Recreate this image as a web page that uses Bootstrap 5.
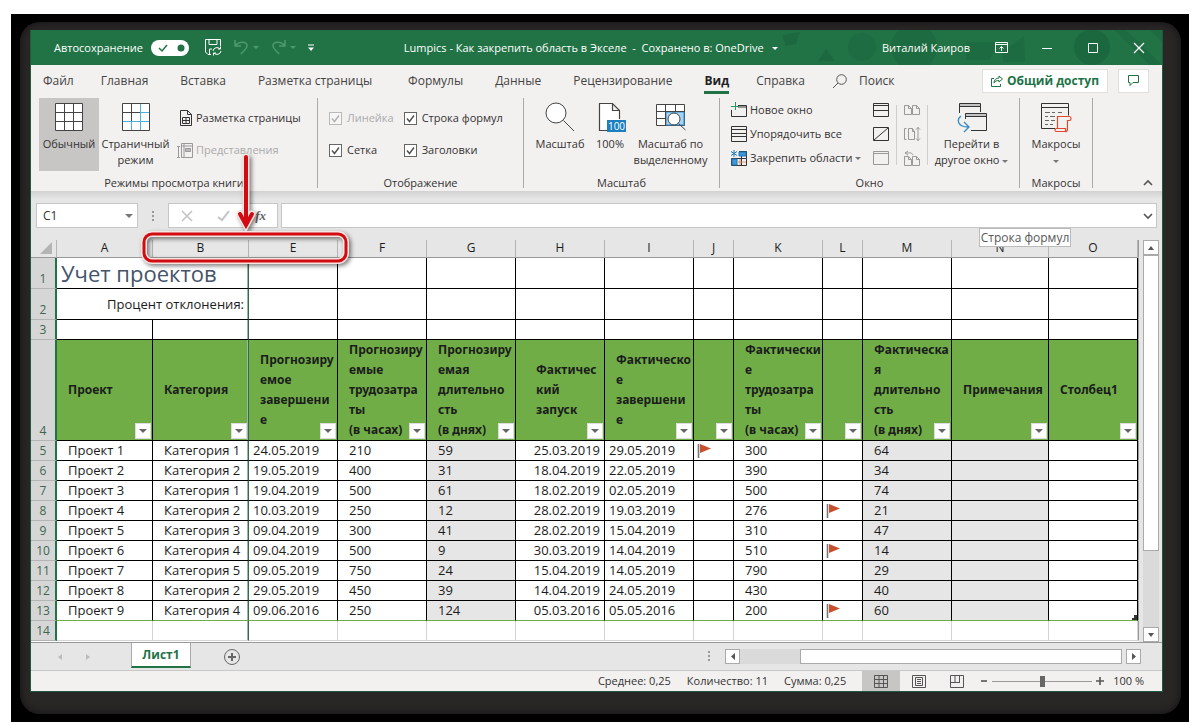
<!DOCTYPE html>
<html lang="ru">
<head>
<meta charset="utf-8">
<meta name="viewport" content="width=device-width, initial-scale=1">
<title>Lumpics - Как закрепить область в Экселе</title>
<link href="https://cdn.jsdelivr.net/npm/bootstrap@5.3.0/dist/css/bootstrap.min.css" rel="stylesheet">
<style>
:root { --xl: #217346; --ribbon: #f3f1f0; --chrome: #e6e6e6; --head: #70ad47; }
body { font-family: "Open Sans", "Noto Sans", sans-serif; font-size: 11px; line-height: 16px; color: #333; background: #fff; }
button, input { font: inherit; color: inherit; }
button { border: 0; background: none; padding: 0; }
svg { display: block; flex: none; overflow: visible; }
.stage { background: #000; margin: 14px 4px 0 11px; padding: 8px 8px 8px 9px; }
.bezel { background: #292626; border-radius: 20px; padding: 8px 18px 22px 10px; box-shadow: inset 0 0 8px #111; }
.app-window { border: 1px solid #1e5a3c; border-top: 0; background: var(--chrome); }

.title-bar { height: 35px; background: var(--xl); color: #fff; padding-left: 23px; overflow: hidden; }
.title-bar > * { position: relative; }
.title-bar .art { position: absolute; right: 0; top: 0; }
.title-bar .doc { flex: 1; margin-left: 86px; white-space: pre; }
.title-bar .history { color: #4e9a6d; margin-left: 12px; }
.win-btn { width: 46px; display: flex; justify-content: center; }
.caret { width: 0; height: 0; border: 3px solid transparent; border-top-color: currentColor; border-bottom: 0; display: inline-block; vertical-align: middle; }

.menu { height: 32px; background: var(--ribbon); font-size: 12px; padding: 0 13px 0 12px; gap: 32px; }
.menu a { color: #444; text-decoration: none; white-space: nowrap; line-height: 20px; padding-top: 3px; border-bottom: 3px solid transparent; }
.menu a.active { font-weight: 700; color: #222; border-color: var(--xl); }
.menu a.near { margin-left: -5px; }
.menu a.apart { margin-left: 4px; }
.menu .white { background: #fff; border: 1px solid #e1dfdd; height: 24px; color: var(--xl); }

.ribbon { height: 94px; background: var(--ribbon); }
.group { border-right: 1px solid #aaa; margin: 1px 0 3px; height: 90px; flex: none; display: flex; flex-direction: column; }
.group-body { height: 77px; flex: none; display: flex; }
.group-label { text-align: center; line-height: 16px; }
.big { display: flex; flex-direction: column; align-items: center; padding-top: 5px; height: 73px; gap: 5px; white-space: nowrap; flex: none; }
.big .pic { height: 28px; display: flex; align-items: center; }
.small-cmd { display: flex; align-items: center; gap: 3px; white-space: nowrap; height: 24px; }
.dim { color: #aaa; }
.tick { appearance: none; width: 13px; height: 13px; border: 1px solid #666; background: #fff url("data:image/svg+xml,%3Csvg xmlns='http://www.w3.org/2000/svg' viewBox='0 0 11 11'%3E%3Cpath d='M2 5.5l2.5 3L9 2.500' fill='none' stroke='%23555' stroke-width='1.500'/%3E%3C/svg%3E") center/11px; margin: 0; flex: none; }
.tick:disabled { opacity: .4; }
.option { display: flex; align-items: center; gap: 5px; height: 32px; white-space: nowrap; }
.rule { width: 1px; background: #d0cecc; height: 60px; margin-top: 7px; }

.formula-row { height: 49px; background: linear-gradient(#d2d2d2, var(--chrome) 8px); padding: 12px 5px 0; }
.box { height: 25px; background: #fff; border: 1px solid #c6c6c6; }
.box input { border: 0; outline: 0; background: none; min-width: 0; padding: 0 6px; font-size: 12px; }
.fx { font: italic bold 13px "Liberation Serif", serif; color: #666; }

.sheet { table-layout: fixed; border-collapse: separate; border-spacing: 0; width: 100%; font-size: 13px; line-height: 19px; color: #1c1c1c; background: #fff; }
.sheet td, .sheet th { padding: 0 0 0 11px; border-right: 1px solid #000; border-bottom: 1px solid #000; overflow: hidden; white-space: nowrap; height: 20px; vertical-align: middle; }
.sheet .letters th { height: 18px; line-height: 16px; padding: 0 0 1px; font-size: 12px; font-weight: 400; text-align: center; background: var(--chrome); border-right-color: #b4b4b4; border-bottom-color: #999; }
.sheet tbody th { padding: 0; text-align: center; vertical-align: bottom; font-weight: 400; font-size: 12px; line-height: 18px; color: #3c6650; background: #d6d6d6; border-right: 2px solid var(--xl); border-bottom-color: #b4b4b4; }
.sheet .tall > * { height: 31px; }
.sheet td.lock { border-right-color: #35684c; box-shadow: inset -1px 0 #9ab8a6; }
.sheet .fields td { position: relative; height: 100px; background: var(--head); font-family: "Noto Sans", sans-serif; font-size: 12px; font-weight: 700; line-height: 20px; }
.sheet .fields td.indent { padding-left: 20px; }
.sheet .edge { border-color: transparent !important; border-right-color: #999 !important; background: #fff !important; padding: 0 !important; box-shadow: none; }
.sheet .letters .edge { background: var(--chrome) !important; }
.sheet .rec td:nth-child(4), .sheet .rec td:nth-child(8) { padding-left: 4px; }
.sheet .rec td:nth-child(7) { padding: 0 4px 0 0; text-align: right; }
.sheet .rec td:nth-child(9), .sheet .rec td:nth-child(11) { padding-left: 3px; }
.sheet .rec td:nth-child(6), .sheet .rec td:nth-child(12), .sheet .rec td:nth-child(13) { background: #e6e6e6; }
.sheet .last td { border-bottom-color: var(--head); }
.sheet .blank td { border-color: #d4d4d4; }
.sheet .blank td.lock { border-right-color: #35684c; }
.sheet .filter { position: absolute; right: 1px; bottom: 1px; width: 16px; height: 16px; background: #fff; border: 1px solid #ddd; display: flex; align-items: center; justify-content: center; color: #666; }
.sheet .filter .caret { border-width: 4px 4px 0; }
.sheet h1 { font-size: 22px; line-height: 30px; margin: 0 0 0 -7px; font-weight: 400; color: #44546a; }
.grid-wrap { border-bottom: 1px solid #999; }
.sheet-area { flex: 1; min-width: 0; padding-bottom: 1px; background: #fff; }
.scroll-y { width: 16px; margin: 0 3px 0 4px; background: #dadada; }
.scroll-btn { width: 15px; height: 15px; background: #fff; border: 1px solid #aaa; display: flex; align-items: center; justify-content: center; flex: none; color: #555; }
.scroll-y .scroll-btn { width: 16px; }
.thumb { background: #fff; border: 1px solid #aaa; }
.scroll-rest { height: 76px; }

.tabs-row { height: 28px; border-bottom: 1px solid #c8c8c8; padding-right: 21px; }
.sheet-tab { width: 60px; height: 25px; background: #fff; border: 1px solid #aaa; border-top: 0; border-bottom: 2px solid var(--xl); color: var(--xl); font-size: 12px; font-weight: 700; margin-left: 41px; }
.scroll-x { width: 416px; margin-left: 15px; background: #dadada; }
.scroll-x .spare { width: 60px; }
.scroll-x .gutter { width: 4px; background: var(--chrome); }
.status { height: 20px; background: var(--ribbon); }
.view { width: 38px; height: 20px; display: flex; align-items: center; justify-content: center; }
.zoom-range { appearance: none; width: 100px; height: 11px; margin: 0; background: linear-gradient(#999, #999) center/100% 1px no-repeat; }
.zoom-range::-webkit-slider-thumb { appearance: none; width: 5px; height: 11px; background: #666; }
.zoom-value { margin: 0 18px 0 9px; }

.hint { left: 948px; top: 198px; width: 92px; height: 19px; background: #fff; border: 1px solid #bbb; font-size: 12px; color: #575757; text-align: center; line-height: 17px; white-space: nowrap; z-index: 2; }
.callout { left: 108px; top: 120px; z-index: 3; pointer-events: none; filter: drop-shadow(2px 2px 2px rgba(0,0,0,.5)); }
</style>
</head>
<body>
<svg width="0" height="0" class="position-absolute" aria-hidden="true">
  <symbol id="flag" viewBox="0 0 16 16"><path d="M1.500 1v14" stroke="#777" stroke-width="1.600"/><path d="M3 1l11 4.500L3 10z" fill="#c8502e"/></symbol>
</svg>
<div class="stage"><div class="bezel"><main class="app-window position-relative">

  <header class="title-bar d-flex align-items-center position-relative">
    <svg class="art" width="410" height="35" viewBox="0 0 410 35" fill="#1b653c" aria-hidden="true"><path d="M30 5l18-3-4 12-10 2zM66 31l8-12 9 12z" opacity=".7"/><circle cx="110" cy="17" r="14" opacity=".5"/><circle cx="162" cy="17" r="23" opacity=".6"/><path d="M214 12h32l-8 18h-24zM250 22l14-10 8-6 1 26h-22z" opacity=".6"/><circle cx="340" cy="17" r="18" opacity=".8"/><path d="M374 0l36 35h-12L362 0zM398 0h12v12z" opacity=".6"/></svg>
    <label for="autosave">Автосохранение</label>
    <button id="autosave" aria-pressed="true" class="ms-2"><svg width="38" height="16" viewBox="0 0 38 16"><rect width="38" height="16" rx="8" fill="#fff"/><path d="M8 8l3 3 5-6" fill="none" stroke="#217346" stroke-width="1.500"/><circle cx="30" cy="8" r="3.500" fill="#217346"/></svg></button>
    <button aria-label="Сохранить" class="ms-3"><svg width="17" height="17" viewBox="0 0 17 17" fill="none" stroke="#fff"><path d="M6 15.500H3L.5 13V.5h15V7M4 .5v5h8v-5M4.500 15.500V10H7"/><path d="M8 12a4 4 0 0 1 7-2m1 2a4 4 0 0 1-7 2M15.500 7.500V10H13M8.500 16.500V14H11"/></svg></button>
    <button aria-label="Отменить" class="history d-flex align-items-center"><svg width="15" height="15" viewBox="0 0 15 15" fill="none" stroke="currentColor" stroke-width="1.500"><path d="M1 0v6h6M1 6c4-5 12-5 12 0 0 3-3 4-6 8"/></svg><span class="caret ms-1"></span></button>
    <button aria-label="Повторить" class="history d-flex align-items-center"><svg width="15" height="15" viewBox="0 0 15 15" fill="none" stroke="currentColor" stroke-width="1.500"><path d="M14 0v6H8M14 6C10 1 2 1 2 6c0 3 3 4 6 8"/></svg><span class="caret ms-1"></span></button>
    <button aria-label="Настройка панели" style="margin-left:12px"><svg width="6" height="8" viewBox="0 0 6 8"><path d="M0 1h6" stroke="#fff"/><path d="M0 3.500h6L3 7z" fill="#fff"/></svg></button>
    <span class="doc ps-1">Lumpics - Как закрепить область в Экселе  -  Сохранено в: OneDrive   <span class="caret"></span></span>
    <span class="me-2">Виталий Каиров</span>
    <button class="win-btn" aria-label="Параметры ленты"><svg width="13" height="11" viewBox="0 0 13 11" fill="none" stroke="#fff"><path d="M.5.5h12v10H.5zM.5 2.500h12M6.500 9V4.500M4.500 6.500l2-2 2 2"/></svg></button>
    <button class="win-btn" aria-label="Свернуть"><svg width="10" height="10"><path d="M0 5.500h10" stroke="#fff"/></svg></button>
    <button class="win-btn" aria-label="Развернуть"><svg width="10" height="10"><path d="M.5.5h9v9h-9z" fill="none" stroke="#fff"/></svg></button>
    <button class="win-btn" aria-label="Закрыть"><svg width="10" height="10"><path d="M0 0l10 10M10 0L0 10" stroke="#fff" stroke-width="1.200"/></svg></button>
  </header>

  <nav class="menu d-flex align-items-center">
    <a href="#">Файл</a><a href="#" class="near">Главная</a><a href="#">Вставка</a><a href="#">Разметка страницы</a><a href="#" class="apart">Формулы</a><a href="#">Данные</a><a href="#">Рецензирование</a><a href="#" class="active">Вид</a><a href="#" class="near">Справка</a>
    <a href="#" class="near d-flex align-items-center" style="gap:11px"><svg width="16" height="15" viewBox="0 0 16 15" fill="none" stroke="#555"><circle cx="9.500" cy="5.500" r="4.800"/><path d="M6 9L1 14"/></svg>Поиск</a>
    <div class="d-flex ms-auto" style="gap:10px">
      <button class="white fw-bold d-flex align-items-center gap-1 px-2 text-nowrap"><svg width="12" height="12" viewBox="0 0 12 12" fill="none" stroke="currentColor"><path d="M3 3.500H.5v8h9V9M8 1l3.500 3L8 7V5.500C5.500 5.500 4 6 3 8c0-3 2-5 5-5z"/></svg>Общий доступ</button>
      <button class="white d-flex align-items-center px-2" aria-label="Примечания"><svg width="13" height="12" viewBox="0 0 13 12" fill="none" stroke="currentColor"><path d="M1.500.5h10v7H6l-3 3v-3H1.500z"/></svg></button>
    </div>
  </nav>

  <section class="ribbon d-flex">
    <div class="group" style="width:287px">
      <div class="group-body ps-2">
        <button class="big" style="width:60px;background:#c8c6c4"><span class="pic"><svg width="28" height="28" viewBox="0 0 28 28" fill="none" stroke="#444"><path d="M.5.5h27v27H.5z" fill="#fff"/><path d="M9.500 0v28M18.500 0v28M0 9.500h28M0 18.500h28"/></svg></span>Обычный</button>
        <button class="big" style="width:73px"><span class="pic"><svg width="28" height="28" viewBox="0 0 28 28" fill="none" stroke="#444"><path d="M.5.5h27v27H.5z" fill="#fff"/><path d="M9.500 0v18M0 9.500h18"/><path d="M18.500 1v26M1 18.500h26M19 9.500h8M9.500 19v8" stroke="#4bafe0"/></svg></span>Страничный<br>режим</button>
        <div class="pt-1" style="margin-left:7px">
          <button class="small-cmd" style="height:32px"><svg width="14" height="16" viewBox="0 0 14 16" fill="none" stroke="#333"><path d="M1.500.5h7l4 4v11h-11zM8.500.5v4h4M3.500 7.500h7v6h-7zM7 7.500v6M3.500 10.500h7"/></svg>Разметка страницы</button>
          <button class="small-cmd dim" style="height:32px" disabled><svg width="14" height="15" viewBox="2 0 14 15" fill="none" stroke="#999"><path d="M0 3.500h3M0 14.500h3M1.500 3.500v11M4.500.5h11v14h-11zM7 0v15M4.500 3h11"/><path d="M8.500 5.500h5v3h-5z" fill="#bbb"/></svg>Представления</button>
        </div>
      </div>
      <div class="group-label">Режимы просмотра книги</div>
    </div>
    <div class="group" style="width:206px">
      <div class="group-body pt-1" style="padding-left:11px;gap:10px">
        <div><label class="option dim"><input class="tick" type="checkbox" checked disabled>Линейка</label><label class="option"><input class="tick" type="checkbox" checked>Сетка</label></div>
        <div><label class="option"><input class="tick" type="checkbox" checked>Строка формул</label><label class="option"><input class="tick" type="checkbox" checked>Заголовки</label></div>
      </div>
      <div class="group-label">Отображение</div>
    </div>
    <div class="group" style="width:196px">
      <div class="group-body ps-2">
        <button class="big" style="width:56px"><span class="pic"><svg width="30" height="28" viewBox="0 0 30 28" fill="none" stroke="#444"><circle cx="11" cy="10" r="10" fill="#fff"/><path d="M18.500 17.500L29 28"/></svg></span>Масштаб</button>
        <button class="big" style="width:44px"><span class="pic"><svg width="27" height="29" viewBox="-2 0 27 29"><path d="M8 27.500H.5V.5h13l7 7V16M13.500.5v7h7" fill="#fff" stroke="#444" stroke-width="1.200"/><path d="M8 17h19v12H8z" fill="#1e7fc0"/><text x="17.500" y="27" fill="#fff" font-size="10" text-anchor="middle">100</text></svg></span>100%</button>
        <button class="big" style="width:77px"><span class="pic"><svg width="30" height="26" viewBox="0 0 30 26" fill="none" stroke="#444"><path d="M.5.500h28v21H.5z" fill="#fff"/><path d="M10 8h18v13H10z" fill="#a6d4f2" stroke="#2f8fd0"/><path d="M9.500 0v22M19.500 0v8M0 7.500h28M0 14.500h10"/><circle cx="18" cy="15" r="6" fill="#fff"/><path d="M22.500 19.500l7 6.500"/></svg></span>Масштаб по<br>выделенному</button>
      </div>
      <div class="group-label">Масштаб</div>
    </div>
    <div class="group" style="width:300px">
      <div class="group-body" style="padding-left:11px">
        <div style="width:142px">
          <button class="small-cmd"><svg width="16" height="16" viewBox="0 0 16 16" fill="none" stroke="#333"><path d="M7 3.500h8.500v11H.5V8M7 5h9"/><path d="M4.500 0v8M0 4.500h8" stroke="#2f9464"/></svg>Новое окно</button>
          <button class="small-cmd"><svg width="16" height="16" viewBox="0 0 16 16" fill="none" stroke="#333"><path d="M.5.500h15v7H.5zM.5 7.500h15v8H.5zM0 3.500h16M0 10.500h16"/></svg>Упорядочить все</button>
          <button class="small-cmd"><svg width="16" height="16" viewBox="1 0 16 16" fill="none" stroke="#333"><path d="M1.500 8.500h15v7h-15zM9 1.500h7.500v7M11.500 2v13M6.500 8v7"/><path d="M9 2h7v4H9zM2 9h5v6H2z" fill="#3f96d8" stroke="#1c74b8"/><path d="M4 0v7M1 1.500l6 4M7 1.500l-6 4" stroke="#1c74b8"/><path d="M10 9v6M8 12h8" stroke="#d9906b"/></svg>Закрепить области<span class="caret" style="color:#777"></span></button>
        </div>
        <div>
          <button class="small-cmd" aria-label="Разделить"><svg width="16" height="14" fill="none" stroke="#333"><path d="M.5.5h15v13H.5zM0 2.500h16M0 7.500h16"/></svg></button>
          <button class="small-cmd" aria-label="Скрыть"><svg width="16" height="14" fill="none" stroke="#333"><path d="M.5.5h15v13H.5zM1 13L15 1"/></svg></button>
          <button class="small-cmd" aria-label="Отобразить" disabled><svg width="16" height="14" fill="none" stroke="#999"><path d="M.5.5h15v13H.5zM0 2.500h16"/></svg></button>
        </div>
        <div class="rule" style="margin-left:7px;margin-right:7px"></div>
        <div>
          <button class="small-cmd" aria-label="Рядом"><svg width="16" height="10" fill="none" stroke="#999"><path d="M.5.5h4l3 3v6h-7zM8.500.5h4l3 3v6h-7zM4.500.5v3h3M12.500.5v3h3"/></svg></button>
          <button class="small-cmd" aria-label="Синхронная прокрутка"><svg width="16" height="14" fill="none" stroke="#999"><path d="M2.500 1.500h-2v11h2M4.500 1.500h4l2 3v8h-6zM8.500 1.500v3h2M14 0v14M12 2.500l2-2 2 2M12 11.500l2 2 2-2"/></svg></button>
          <button class="small-cmd" aria-label="Восстановить расположение"><svg width="16" height="15" fill="none" stroke="#999"><path d="M.5 5.500h4l3 3v6h-7zM8.500 5.500h4l3 3v6h-7zM4.500 5.500v3h3M12.500 5.500v3h3M9 4C8 1 4 2 1 2M4 0L1 2l3 2"/></svg></button>
        </div>
        <div class="rule" style="margin-left:7px"></div>
        <button class="big" style="width:87px"><span class="pic"><svg width="30" height="28" viewBox="0 0 30 28" fill="none" stroke="#333"><path d="M2.500 10V.5h21V9M2.500 3.500h21M14 27.500h15.500v-17h-21V16M8.500 13.500h21"/><path d="M3 1h20v2H3zM9 11h20v2H9z" fill="#c4c4c4" stroke="none"/><path d="M4 13c-5 4-3 11 7 11M7 19l5 5-5 5" stroke="#3b8bc4" stroke-width="1.400"/></svg></span><span>Перейти в<br>другое окно <span class="caret" style="color:#777"></span></span></button>
      </div>
      <div class="group-label">Окно</div>
    </div>
    <div class="group" style="width:73px">
      <div class="group-body justify-content-center">
        <button class="big"><span class="pic"><svg width="30" height="29" viewBox="0 0 30 29" fill="none" stroke="#333"><path d="M14 25.500H.5V.5h27v12M0 4.500h28" /><path d="M4 9.500h5M11 9.500h3M17 9.500h4M4 13.500h3M9 13.500h5M4 17.500h4M10 17.500h4M4 21.500h3M9 21.500h3" stroke="#666"/><path d="M16.500 25V13.500h12c2 0 2 4 0 4h-2V26c0 3-2 3-2 2.500h-9c-2 0-2-3 0-3h9V28" stroke="#e0492f" stroke-width="1.200"/></svg></span><span>Макросы<br><span class="caret" style="color:#777"></span></span></button>
      </div>
      <div class="group-label">Макросы</div>
    </div>
    <button class="ms-auto align-self-end pb-1 me-2" aria-label="Свернуть ленту"><svg width="12" height="9" fill="none" stroke="#555" stroke-width="1.600"><path d="M2 7l4-4 4 4"/></svg></button>
  </section>

  <section class="formula-row d-flex">
    <div class="box d-flex align-items-center pe-1" style="width:102px"><input class="w-100" value="C1" aria-label="Имя"><span class="caret" style="border-width:4px 4px 0;color:#777"></span></div>
    <svg class="mt-2" style="margin:0 14px" width="2" height="12" fill="#999"><path d="M0 0h2v2H0zM0 4h2v2H0zM0 8h2v2H0z"/></svg>
    <div class="box d-flex align-items-center justify-content-between" style="width:110px;padding:0 11px 0 13px">
      <button aria-label="Отмена" disabled><svg width="10" height="10" stroke="#c4c4c4" stroke-width="1.600"><path d="M0 0l10 10M10 0L0 10"/></svg></button>
      <button aria-label="Ввод" disabled><svg width="12" height="10" fill="none" stroke="#c4c4c4" stroke-width="2"><path d="M0 6l4 3 7-9"/></svg></button>
      <button class="fx">fx</button>
    </div>
    <div class="box d-flex align-items-center flex-grow-1 pe-1" style="margin-left:3px"><input class="flex-grow-1" aria-label="Строка формул"><svg width="8" height="6" fill="none" stroke="#555" stroke-width="1.600"><path d="M0 1l4 4 4-4"/></svg></div>
  </section>

  <section class="grid-wrap d-flex">
    <div class="sheet-area">
    <table class="sheet">
      <colgroup><col style="width:26px"><col style="width:96px"><col style="width:96px"><col style="width:89px"><col style="width:89px"><col style="width:89px"><col style="width:89px"><col style="width:89px"><col style="width:40px"><col style="width:89px"><col style="width:40px"><col style="width:89px"><col style="width:97px"><col style="width:89px"><col></colgroup>
      <thead><tr class="letters"><th><svg class="ms-auto me-1" width="12" height="12"><path d="M12 0v12H0z" fill="#b4b4b4"/></svg></th><th>A</th><th>B</th><th>E</th><th>F</th><th>G</th><th>H</th><th>I</th><th>J</th><th>K</th><th>L</th><th>M</th><th>N</th><th>O</th><th class="edge"></th></tr></thead>
      <tbody>
      <tr class="tall"><th>1</th><td colspan="2" class="lock"><h1>Учет проектов</h1></td><td></td><td></td><td></td><td></td><td></td><td></td><td></td><td></td><td></td><td></td><td></td><td class="edge"></td></tr>
      <tr class="tall"><th>2</th><td colspan="2" class="lock text-end pe-1">Процент отклонения:</td><td></td><td></td><td></td><td></td><td></td><td></td><td></td><td></td><td></td><td></td><td></td><td class="edge"></td></tr>
      <tr><th>3</th><td></td><td class="lock"></td><td></td><td></td><td></td><td></td><td></td><td></td><td></td><td></td><td></td><td></td><td></td><td class="edge"></td></tr>
      <tr class="fields"><th>4</th>
        <td>Проект<button class="filter" aria-label="Фильтр"><span class="caret"></span></button></td>
        <td class="lock">Категория<button class="filter" aria-label="Фильтр"><span class="caret"></span></button></td>
        <td>Прогнозиру<br>емое<br>завершени<br>е<button class="filter" aria-label="Фильтр"><span class="caret"></span></button></td>
        <td>Прогнозиру<br>емые<br>трудозатра<br>ты<br>(в часах)<button class="filter" aria-label="Фильтр"><span class="caret"></span></button></td>
        <td>Прогнозиру<br>емая<br>длительно<br>сть<br>(в днях)<button class="filter" aria-label="Фильтр"><span class="caret"></span></button></td>
        <td class="indent">Фактичес<br>кий<br>запуск<button class="filter" aria-label="Фильтр"><span class="caret"></span></button></td>
        <td>Фактическо<br>е<br>завершени<br>е<button class="filter" aria-label="Фильтр"><span class="caret"></span></button></td>
        <td><button class="filter" aria-label="Фильтр"><span class="caret"></span></button></td>
        <td>Фактически<br>е<br>трудозатра<br>ты<br>(в часах)<button class="filter" aria-label="Фильтр"><span class="caret"></span></button></td>
        <td><button class="filter" aria-label="Фильтр"><span class="caret"></span></button></td>
        <td>Фактическа<br>я<br>длительно<br>сть<br>(в днях)<button class="filter" aria-label="Фильтр"><span class="caret"></span></button></td>
        <td>Примечания<button class="filter" aria-label="Фильтр"><span class="caret"></span></button></td>
        <td>Столбец1<button class="filter" aria-label="Фильтр"><span class="caret"></span></button></td><td class="edge"></td></tr>
      <tr class="rec"><th>5</th><td>Проект 1</td><td class="lock">Категория 1</td><td>24.05.2019</td><td>210</td><td>59</td><td>25.03.2019</td><td>29.05.2019</td><td><svg width="16" height="16"><use href="#flag"/></svg></td><td>300</td><td></td><td>64</td><td></td><td></td><td class="edge"></td></tr>
      <tr class="rec"><th>6</th><td>Проект 2</td><td class="lock">Категория 2</td><td>19.05.2019</td><td>400</td><td>31</td><td>18.04.2019</td><td>22.05.2019</td><td></td><td>390</td><td></td><td>34</td><td></td><td></td><td class="edge"></td></tr>
      <tr class="rec"><th>7</th><td>Проект 3</td><td class="lock">Категория 1</td><td>19.04.2019</td><td>500</td><td>61</td><td>18.02.2019</td><td>02.05.2019</td><td></td><td>500</td><td></td><td>74</td><td></td><td></td><td class="edge"></td></tr>
      <tr class="rec"><th>8</th><td>Проект 4</td><td class="lock">Категория 2</td><td>10.03.2019</td><td>250</td><td>12</td><td>28.02.2019</td><td>19.03.2019</td><td></td><td>276</td><td><svg width="16" height="16"><use href="#flag"/></svg></td><td>21</td><td></td><td></td><td class="edge"></td></tr>
      <tr class="rec"><th>9</th><td>Проект 5</td><td class="lock">Категория 3</td><td>09.04.2019</td><td>300</td><td>41</td><td>28.02.2019</td><td>15.04.2019</td><td></td><td>310</td><td></td><td>47</td><td></td><td></td><td class="edge"></td></tr>
      <tr class="rec"><th>10</th><td>Проект 6</td><td class="lock">Категория 4</td><td>09.04.2019</td><td>500</td><td>9</td><td>30.03.2019</td><td>14.04.2019</td><td></td><td>510</td><td><svg width="16" height="16"><use href="#flag"/></svg></td><td>14</td><td></td><td></td><td class="edge"></td></tr>
      <tr class="rec"><th>11</th><td>Проект 7</td><td class="lock">Категория 5</td><td>09.05.2019</td><td>750</td><td>24</td><td>15.04.2019</td><td>14.05.2019</td><td></td><td>790</td><td></td><td>29</td><td></td><td></td><td class="edge"></td></tr>
      <tr class="rec"><th>12</th><td>Проект 8</td><td class="lock">Категория 2</td><td>29.05.2019</td><td>450</td><td>39</td><td>14.04.2019</td><td>24.05.2019</td><td></td><td>430</td><td></td><td>40</td><td></td><td></td><td class="edge"></td></tr>
      <tr class="rec last"><th>13</th><td>Проект 9</td><td class="lock">Категория 4</td><td>09.06.2016</td><td>250</td><td>124</td><td>05.03.2016</td><td>05.05.2016</td><td></td><td>200</td><td><svg width="16" height="16"><use href="#flag"/></svg></td><td>60</td><td></td><td class="align-bottom"><svg class="ms-auto" width="5" height="5"><path d="M5 0v5H0V3h2V0z" fill="#333"/></svg></td><td class="edge"></td></tr>
      <tr class="blank"><th>14</th><td></td><td class="lock"></td><td></td><td></td><td></td><td></td><td></td><td></td><td></td><td></td><td></td><td></td><td></td><td class="edge"></td></tr>
      </tbody>
    </table>
    </div>
    <div class="scroll-y d-flex flex-column">
      <button class="scroll-btn" aria-label="Вверх"><svg width="6" height="4"><path d="M3 0l3 4H0z" fill="#555"/></svg></button>
      <div class="thumb flex-grow-1"></div><div class="scroll-rest"></div>
      <button class="scroll-btn" aria-label="Вниз"><svg width="6" height="4"><path d="M3 4l3-4H0z" fill="#555"/></svg></button>
    </div>
  </section>

  <section class="tabs-row d-flex align-items-center">
    <button class="mx-4" style="padding-left:3px" aria-label="Назад"><svg width="4" height="6"><path d="M4 0v6L0 3z" fill="#bbb"/></svg></button>
    <button aria-label="Вперед"><svg width="4" height="6"><path d="M0 0v6l4-3z" fill="#bbb"/></svg></button>
    <button class="sheet-tab align-self-start">Лист1</button>
    <button style="margin-left:33px" aria-label="Новый лист"><svg width="16" height="16" fill="none" stroke="#666"><circle cx="8" cy="8" r="7.500"/><path d="M8 4v8M4 8h8" stroke-width="2"/></svg></button>
    <svg class="ms-auto" width="2" height="11" fill="#999"><path d="M0 0h2v2H0zM0 4h2v2H0zM0 8h2v2H0z"/></svg>
    <div class="scroll-x d-flex">
      <button class="scroll-btn" aria-label="Влево"><svg width="4" height="7"><path d="M4 0v7L0 3.500z" fill="#555"/></svg></button>
      <div class="spare"></div><div class="thumb flex-grow-1"></div><div class="gutter"></div>
      <button class="scroll-btn" aria-label="Вправо"><svg width="4" height="7"><path d="M0 0v7l4-3.500z" fill="#555"/></svg></button>
    </div>
  </section>

  <footer class="status d-flex align-items-center justify-content-end">
    <span>Среднее: 0,25</span><span class="ms-3">Количество: 11</span><span class="mx-3">Сумма: 0,25</span>
    <button class="view" style="background:#c8c6c4" aria-label="Обычный"><svg width="14" height="13" fill="none" stroke="#555"><path d="M.5.5h13v12H.5zM5 0v13M9.500 0v13M0 4.500h14M0 8.500h14"/></svg></button>
    <button class="view" aria-label="Разметка"><svg width="14" height="13" fill="none" stroke="#555"><path d="M.5.5h13v12H.5zM3.500 2.500h7v8h-7zM5 4.500h4M5 6.500h4M5 8.500h4"/></svg></button>
    <button class="view" aria-label="Страничный"><svg width="14" height="13" fill="none" stroke="#555"><path d="M.5.5h13v12H.5zM5 0v7.500M9.500 0v7.500M0 7.500h10"/></svg></button>
    <button class="ms-1" aria-label="Уменьшить"><svg width="8" height="8"><path d="M1 4h6" stroke="#555" stroke-width="1.600"/></svg></button>
    <input class="zoom-range mx-1" type="range" aria-label="Масштаб" min="0" max="100" value="50">
    <button aria-label="Увеличить"><svg width="8" height="8"><path d="M0 4h8M4 0v8" stroke="#555" stroke-width="1.600"/></svg></button>
    <span class="zoom-value text-nowrap">100 %</span>
  </footer>

  <div class="hint position-absolute">Строка формул</div>
  <svg class="callout position-absolute" width="214" height="120" viewBox="0 0 214 120" fill="none" aria-hidden="true">
    <rect x="5" y="84" width="202" height="27" rx="8" stroke="#f6e4e0" stroke-width="6"/><rect x="5" y="84" width="202" height="27" rx="8" stroke="#d20a11" stroke-width="3"/>
    <path d="M107 7v66M101 64l6 11 6-11" stroke="#f6e4e0" stroke-width="7" stroke-linecap="round"/>
    <path d="M107 7v66M101 64l6 11 6-11" stroke="#d20a11" stroke-width="4" stroke-linecap="round"/>
  </svg>
</main></div></div>
<script src="https://cdn.jsdelivr.net/npm/bootstrap@5.3.0/dist/js/bootstrap.bundle.min.js"></script>
</body>
</html>
